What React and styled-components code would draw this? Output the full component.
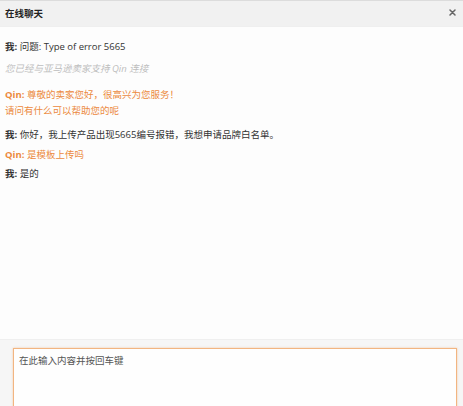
import React from "react";
import styled, { createGlobalStyle } from "styled-components";

const Global = createGlobalStyle`
  html, body { margin: 0; padding: 0; overflow: hidden; background: #fdfdfd; }
  * { box-sizing: border-box; }
`;

const Window = styled.div`
  width: 463px;
  height: 406px;
  display: flex;
  flex-direction: column;
  overflow: hidden;
  font-family: "Open Sans", "Noto Sans CJK SC", sans-serif;
  font-size: 9.5px;
  color: #333;
  background: #fdfdfd;
`;

const Header = styled.div`
  height: 27px;
  flex: none;
  display: flex;
  align-items: center;
  justify-content: space-between;
  padding: 0 5px 2px 5px;
  background: #f1f1f1;
  border-top: 1px solid #dcdcdc;
  border-bottom: 1px solid #efefef;
`;

const Title = styled.div`
  font-weight: bold;
  font-size: 9.5px;
  color: #222;
`;

const Close = styled.button`
  border: none;
  background: none;
  padding: 0;
  width: 7px;
  height: 7px;
  margin-right: 2px;
  display: flex;
  cursor: pointer;
`;

const Messages = styled.div`
  flex: 1;
  padding: 12px 5px 0 5px;
  display: flex;
  flex-direction: column;
`;

const Line = styled.div`
  line-height: 16px;
  margin-bottom: ${(p) => p.$gap ?? 4}px;
  color: ${(p) => (p.$kind === "agent" ? "#ec8a3d" : p.$kind === "system" ? "#bdbdbd" : "#333")};
  font-style: ${(p) => (p.$kind === "system" ? "italic" : "normal")};
  white-space: nowrap;
`;

const Who = styled.b`
  font-weight: bold;
`;

const Footer = styled.div`
  flex: none;
  height: 67px;
  padding: 8px 6px 0 13px;
  background: #f6f6f6;
  border-top: 1px solid #efefef;
`;

const Input = styled.textarea`
  display: block;
  width: 100%;
  height: 90px;
  resize: none;
  border: 1px solid #f2b581;
  box-shadow: 0 0 2px rgba(240, 160, 90, 0.5);
  background: #fefefe;
  outline: none;
  padding: 4px 5px;
  font-family: "Open Sans", "Noto Sans CJK SC", sans-serif;
  font-size: 9.5px;
  &::placeholder { color: #555; }
`;

export default function App() {
  return (
    <>
      <Global />
      <Window>
        <Header>
          <Title>在线聊天</Title>
          <Close aria-label="关闭">
            <svg width="7" height="7" viewBox="0 0 7 7">
              <path d="M1 1L6 6M6 1L1 6" stroke="#666" strokeWidth="1.5" strokeLinecap="round" />
            </svg>
          </Close>
        </Header>
        <Messages>
          <Line $gap={6}><Who>我:</Who> 问题: Type of error 5665</Line>
          <Line $kind="system" $gap={10}>您已经与亚马逊卖家支持 Qin 连接</Line>
          <Line $kind="agent" $gap={0}><Who>Qin:</Who> 尊敬的卖家您好，很高兴为您服务！</Line>
          <Line $kind="agent" $gap={8}>请问有什么可以帮助您的呢</Line>
          <Line $gap={4}><Who>我:</Who> 你好，我上传产品出现5665编号报错，我想申请品牌白名单。</Line>
          <Line $kind="agent" $gap={3}><Who>Qin:</Who> 是模板上传吗</Line>
          <Line><Who>我:</Who> 是的</Line>
        </Messages>
        <Footer>
          <Input placeholder="在此输入内容并按回车键" />
        </Footer>
      </Window>
    </>
  );
}
